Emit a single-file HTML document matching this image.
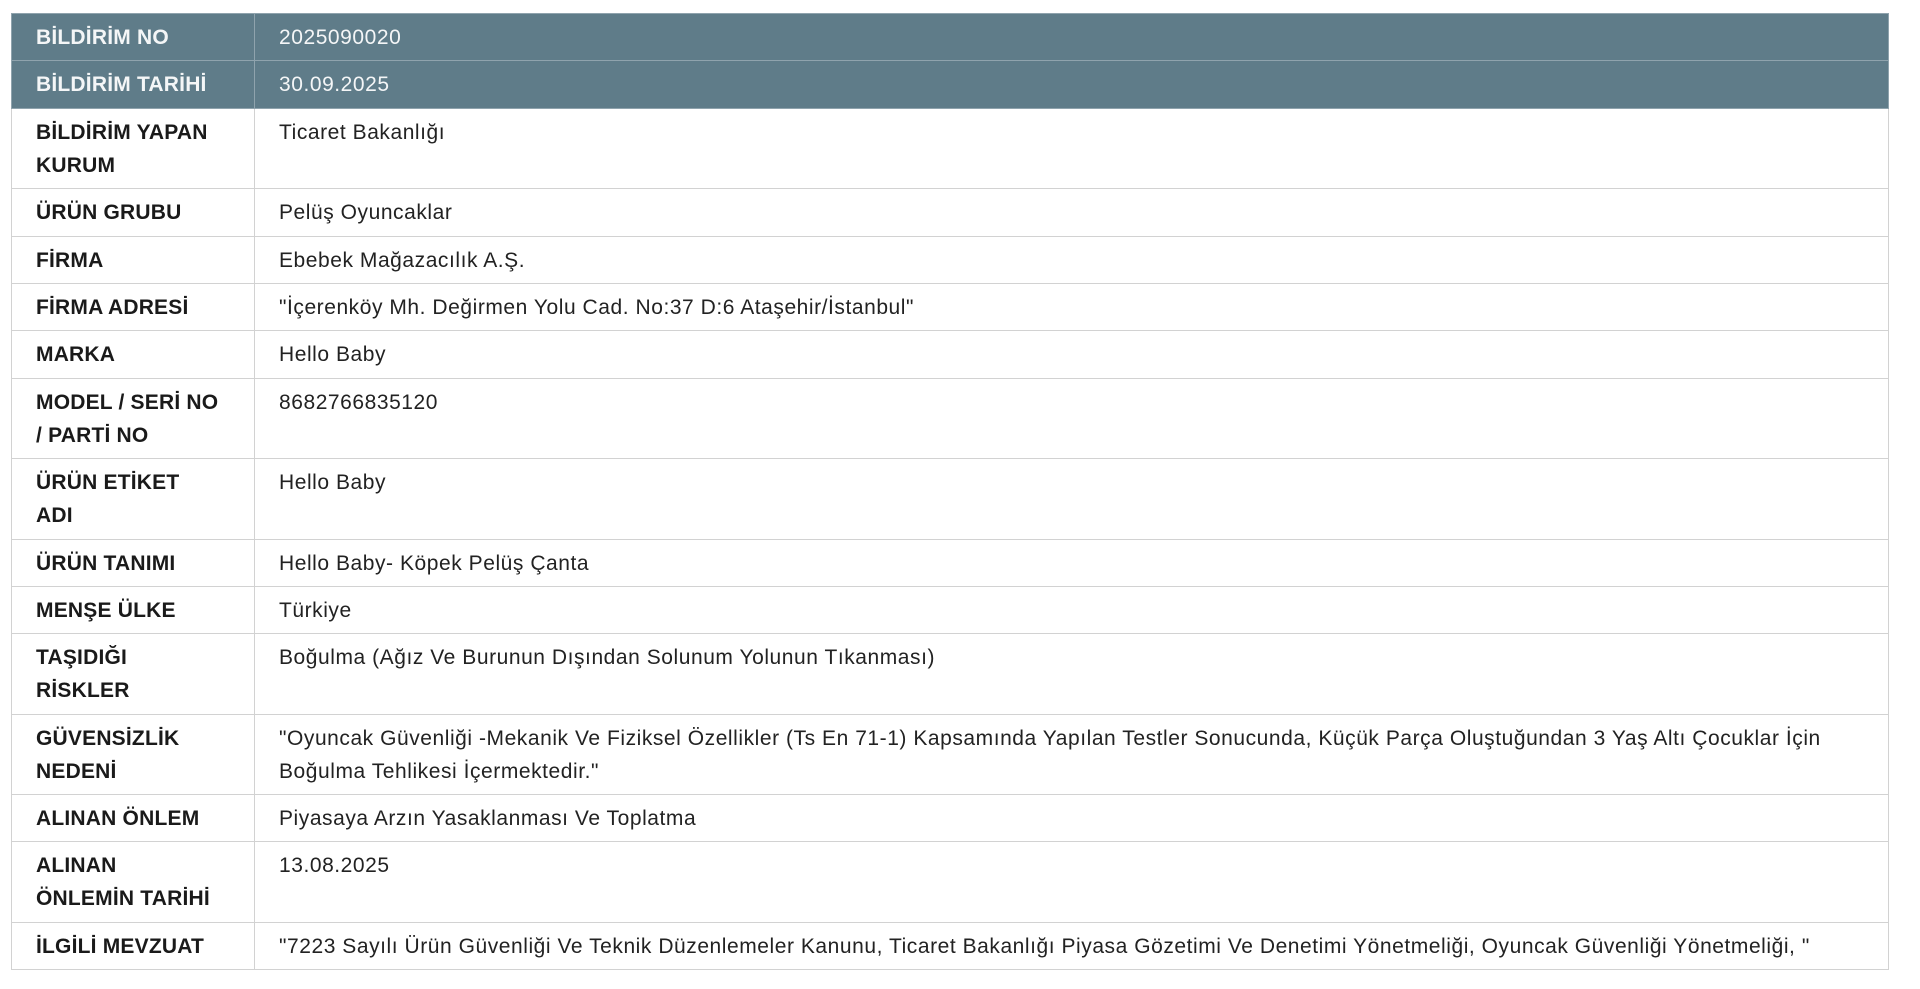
<!DOCTYPE html>
<html><head><meta charset="utf-8"><style>
html,body{margin:0;padding:0;background:#fff;width:1920px;height:989px;overflow:hidden}
table{position:absolute;left:11px;top:13px;width:1878px;border-collapse:collapse;font-family:"Liberation Sans",Arial,sans-serif;font-size:21px;letter-spacing:0.55px;line-height:33px;color:#222}
td{border:1px solid #d2d2d2;padding:7px 24px 6.4px 24px;vertical-align:top;white-space:nowrap}
td.l{width:194px;font-weight:bold;color:#1a1a1a;letter-spacing:0.2px}
tr.h td{background:#5f7c89;color:#f4f6f7;border-color:#8fa3ad}
</style></head><body>
<table>
<tr class="h"><td class="l" style="color:#f4f6f7">BİLDİRİM NO</td><td>2025090020</td></tr>
<tr class="h"><td class="l" style="color:#f4f6f7">BİLDİRİM TARİHİ</td><td>30.09.2025</td></tr>
<tr><td class="l">BİLDİRİM YAPAN<br>KURUM</td><td>Ticaret Bakanlığı</td></tr>
<tr><td class="l">ÜRÜN GRUBU</td><td>Pelüş Oyuncaklar</td></tr>
<tr><td class="l">FİRMA</td><td>Ebebek Mağazacılık A.Ş.</td></tr>
<tr><td class="l">FİRMA ADRESİ</td><td>"İçerenköy Mh. Değirmen Yolu Cad. No:37 D:6 Ataşehir/İstanbul"</td></tr>
<tr><td class="l">MARKA</td><td>Hello Baby</td></tr>
<tr><td class="l">MODEL / SERİ NO<br>/ PARTİ NO</td><td>8682766835120</td></tr>
<tr><td class="l">ÜRÜN ETİKET<br>ADI</td><td>Hello Baby</td></tr>
<tr><td class="l">ÜRÜN TANIMI</td><td>Hello Baby- Köpek Pelüş Çanta</td></tr>
<tr><td class="l">MENŞE ÜLKE</td><td>Türkiye</td></tr>
<tr><td class="l">TAŞIDIĞI<br>RİSKLER</td><td>Boğulma (Ağız Ve Burunun Dışından Solunum Yolunun Tıkanması)</td></tr>
<tr><td class="l">GÜVENSİZLİK<br>NEDENİ</td><td>"Oyuncak Güvenliği -Mekanik Ve Fiziksel Özellikler (Ts En 71-1) Kapsamında Yapılan Testler Sonucunda, Küçük Parça Oluştuğundan 3 Yaş Altı Çocuklar İçin<br>Boğulma Tehlikesi İçermektedir."</td></tr>
<tr><td class="l">ALINAN ÖNLEM</td><td>Piyasaya Arzın Yasaklanması Ve Toplatma</td></tr>
<tr><td class="l">ALINAN<br>ÖNLEMİN TARİHİ</td><td>13.08.2025</td></tr>
<tr><td class="l">İLGİLİ MEVZUAT</td><td>"7223 Sayılı Ürün Güvenliği Ve Teknik Düzenlemeler Kanunu, Ticaret Bakanlığı Piyasa Gözetimi Ve Denetimi Yönetmeliği, Oyuncak Güvenliği Yönetmeliği, "</td></tr>
</table>
</body></html>
